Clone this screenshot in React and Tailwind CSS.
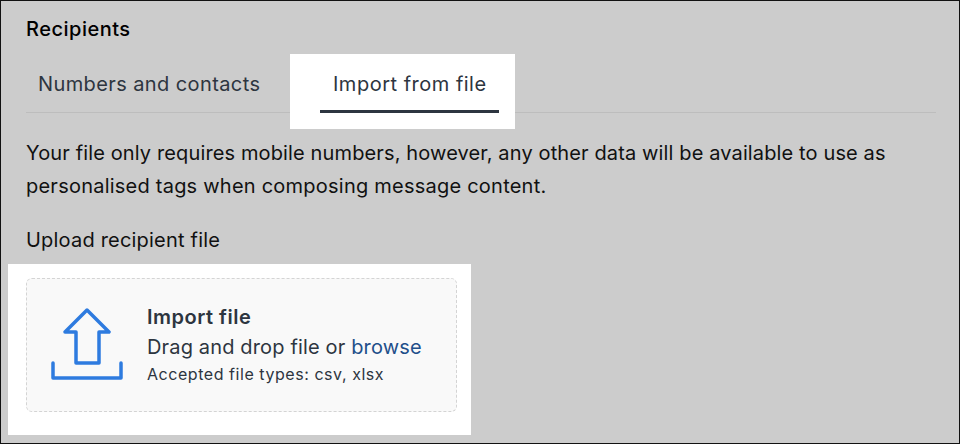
export default function App() {
  return (
    <div className="w-[960px] h-[444px] box-border border border-[#111111] bg-[#cccccc] pl-[25px] pr-[23px] overflow-hidden text-[#2d3540] font-['Inter',sans-serif]">
      <h2 className="m-0 pt-[15px] h-[53px] text-[20px] leading-[26px] tracking-[0.5px] font-medium text-black">Recipients</h2>
      <div className="relative h-[59px] border-b border-[#bdbdbd] flex items-start">
        <div className="w-[264px] pl-[12px] pt-[16px] text-[20px] leading-[28px] tracking-[0.4px] shrink-0">Numbers and contacts</div>
        <div className="bg-white w-[225px] h-[75px] relative shrink-0 pl-[43px] pt-[16px] text-[20px] leading-[28px] tracking-[0.5px]">
          Import from file
          <div className="absolute left-[30px] top-[56px] w-[179px] h-[3px] bg-[#2d3540]"></div>
        </div>
      </div>
      <p className="m-0 mt-[24px] text-[20px] leading-[33px] tracking-[0.13px] text-[#111] w-[900px]">
        Your file only requires mobile numbers, however, any other data will be available to use as <span className="tracking-[0.23px]">personalised tags when composing message content.</span>
      </p>
      <p className="m-0 mt-[23px] text-[20px] leading-[28px] tracking-[0.2px] text-[#111]">Upload recipient file</p>
      <div className="-ml-[18px] mt-[10px] w-[463px] h-[171px] bg-white pt-[14px] pl-[18px]">
        <div className="w-[431px] h-[134px] box-border border border-dashed border-[#d4d4d4] rounded-[6px] bg-[#f9f9f9] flex items-center">
          <svg className="ml-[23px] shrink-0" width="74" height="74" viewBox="0 0 74 74" fill="none" stroke="#2e7bdf" strokeWidth="3.5" strokeLinejoin="round" strokeLinecap="round">
            <path d="M37 2 L59 24 H49 V55 H26 V24 H15 Z" />
            <path d="M3 55 V70 H71 V55" />
          </svg>
          <div className="ml-[23px] flex flex-col -mt-[2px]">
            <div className="text-[20px] leading-[30px] tracking-[0.5px] font-semibold text-[#2d3540] -mt-[1px]">Import file</div>
            <div className="text-[20px] leading-[30px] tracking-[0.15px] text-[#2d3540]">Drag and drop file or <span className="text-[#1f4f8a]">browse</span></div>
            <div className="text-[16px] leading-[24px] tracking-[0.55px] text-[#2d3540]">Accepted file types: csv, xlsx</div>
          </div>
        </div>
      </div>
    </div>
  );
}
